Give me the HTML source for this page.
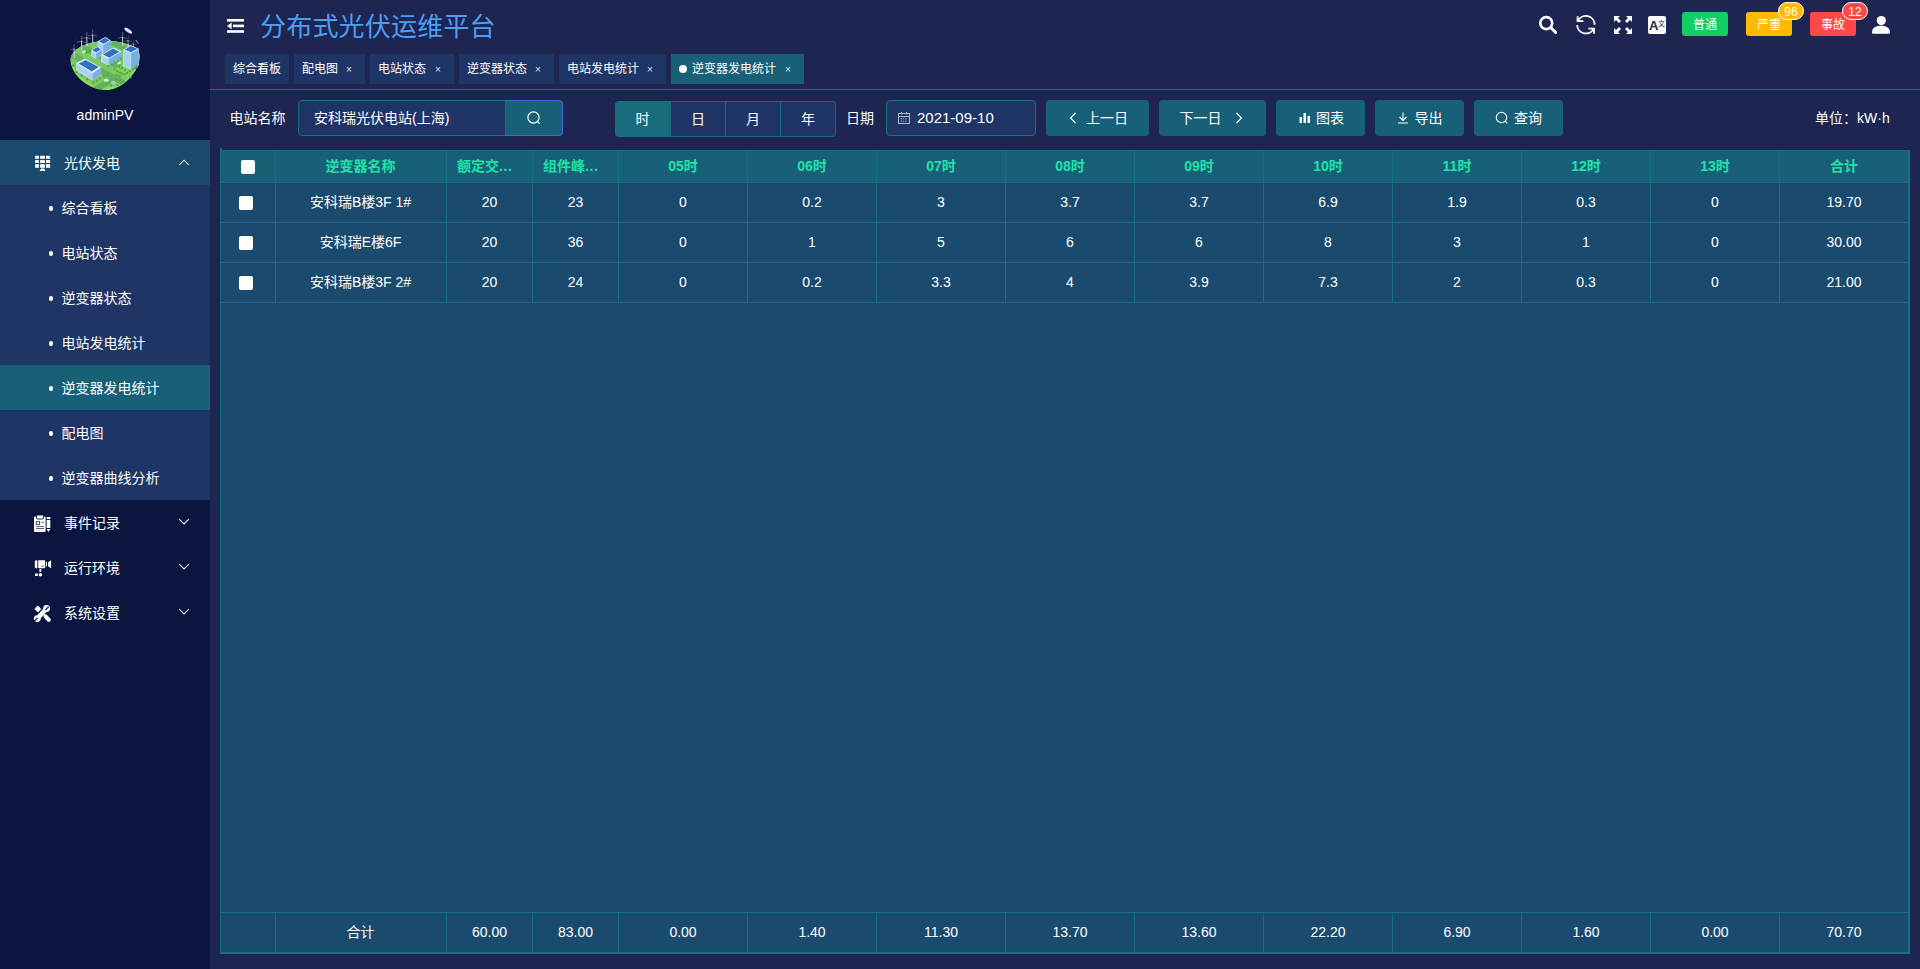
<!DOCTYPE html>
<html lang="zh-CN">
<head>
<meta charset="utf-8">
<title>分布式光伏运维平台</title>
<style>
*{box-sizing:border-box;margin:0;padding:0}
html,body{width:1920px;height:969px;overflow:hidden}
body{background:#1d2550;font-family:"Liberation Sans","Noto Sans CJK SC",sans-serif;color:#fff;font-size:14px;position:relative}
.abs{position:absolute}
/* sidebar */
#side{position:absolute;left:0;top:0;width:210px;height:969px;background:#0c1440}
#side .uname{position:absolute;left:0;width:210px;top:106px;text-align:center;font-size:14px;line-height:18px}
.mi{position:absolute;left:0;width:210px;height:45px;line-height:45px;font-size:14px}
.mi .ic2{position:absolute;left:0;top:0;width:80px;height:45px}
.mi .tx{position:absolute;left:64px;top:1px}
.mi .ar{position:absolute;left:178px;top:17px;width:12px;height:10px}
.sub{position:absolute;left:0;width:210px;height:45px;line-height:45px;font-size:14px;background:#1f3566}
.sub.on{background:#186078}
.sub .dot{position:absolute;left:48.6px;top:21.3px;width:4.6px;height:4.6px;border-radius:50%;background:#fff}
.sub .tx{position:absolute;left:61.6px;top:1px}
/* header */
#title{position:absolute;left:260px;top:9px;font-size:26px;line-height:36px;color:#4a9ff5;white-space:nowrap;letter-spacing:0.2px}
.tab{position:absolute;top:54px;height:30px;line-height:31px;background:#1f3566;font-size:12px;white-space:nowrap;padding-left:8px}
.tab.on{background:#186078}
.tab .x{position:absolute;top:0;font-size:10px;color:#dfe6f2}
#hline{position:absolute;left:210px;top:89px;width:1710px;height:1px;background:#17707f}
.badge{position:absolute;top:12px;height:24px;width:46px;border-radius:3px;font-size:12px;line-height:26px;text-align:center}
.cnt{position:absolute;top:2px;height:18px;border-radius:9px;font-size:12px;line-height:18px;text-align:center;border:1px solid #fff}
/* toolbar */
.lbl{position:absolute;top:100px;height:36px;line-height:36px;font-size:14px;white-space:nowrap}
.btn{position:absolute;top:100px;height:36px;line-height:36px;background:#186078;border-radius:4px;font-size:14px;text-align:center;white-space:nowrap}
.inp{position:absolute;top:100px;height:36px;line-height:34px;background:#1f3566;border:1px solid #18727f;font-size:14px;white-space:nowrap}
.rad{position:absolute;top:101px;height:36px;line-height:34px;background:#1f3566;border:1px solid #1a6a80;border-left:none;font-size:14px;text-align:center}
/* table */
#tbl{position:absolute;left:220px;top:150px;width:1690px;height:804px;background:#1b4a6f;border:1px solid #17707f;border-right-width:2px;border-bottom-width:2px}
.row{position:absolute;left:0;width:1687px}
.c{position:absolute;top:0;height:100%;text-align:center;border-right:1px solid #17707f;font-size:14px;white-space:nowrap;overflow:hidden}
.hd{background:#186078;color:#1fe3a9;font-weight:bold;font-size:13px}
.cb{position:absolute;width:14px;height:14px;background:#fff;border-radius:2px}
</style>
</head>
<body>
<div id="side">
<svg class="abs" style="left:60px;top:15px" width="90" height="85" viewBox="0 0 1026 969"><defs><clipPath id="isl"><path d="M120 520C118 400 290 300 520 297C760 294 915 380 910 475C902 640 730 852 520 856C330 858 128 690 120 520Z"/></clipPath></defs><path d="M120 520C118 400 290 300 520 297C760 294 915 380 910 475C902 640 730 852 520 856C330 858 128 690 120 520Z" fill="#8cdc5e"/><g clip-path="url(#isl)"><path d="M120 480C118 380 290 290 520 287C760 284 915 370 910 455C902 610 730 822 520 826C330 828 128 650 120 480Z" fill="#7cc862"/><g fill="#62b35c"><path d="M100 470L170 430L760 760L700 800Z"/><path d="M380 820L880 540L930 570L450 860Z"/><path d="M200 370L270 330L760 600L700 640Z"/><path d="M560 330L640 290L930 450L880 490Z"/></g><path d="M600 630L720 560L880 640L740 720Z" fill="#86d15e"/></g><path d="M372 228L375 320" stroke="#f2f6fb" stroke-width="9" stroke-linecap="round"/><g stroke="#f2f6fb" stroke-width="5" stroke-linecap="round" opacity="0.75"><path d="M372 228L374 170"/><path d="M372 228L324 236"/><path d="M372 228L418 240"/></g><path d="M305 258L308 350" stroke="#f2f6fb" stroke-width="9" stroke-linecap="round"/><g stroke="#f2f6fb" stroke-width="5" stroke-linecap="round" opacity="0.75"><path d="M305 258L307 200"/><path d="M305 258L257 266"/><path d="M305 258L351 270"/></g><path d="M245 300L248 392" stroke="#f2f6fb" stroke-width="9" stroke-linecap="round"/><g stroke="#f2f6fb" stroke-width="5" stroke-linecap="round" opacity="0.75"><path d="M245 300L247 242"/><path d="M245 300L197 308"/><path d="M245 300L291 312"/></g><path d="M160 388L163 483" stroke="#f2f6fb" stroke-width="8" stroke-linecap="round"/><g stroke="#f2f6fb" stroke-width="4" stroke-linecap="round" opacity="0.75"><path d="M160 388L162 336"/><path d="M160 388L117 395"/><path d="M160 388L201 399"/></g><path d="M712 255L715 347" stroke="#f2f6fb" stroke-width="9" stroke-linecap="round"/><g stroke="#f2f6fb" stroke-width="5" stroke-linecap="round" opacity="0.75"><path d="M712 255L714 197"/><path d="M712 255L664 263"/><path d="M712 255L758 267"/></g><path d="M775 292L778 352" stroke="#f2f6fb" stroke-width="7" stroke-linecap="round"/><g stroke="#f2f6fb" stroke-width="4" stroke-linecap="round" opacity="0.75"><path d="M775 292L777 246"/><path d="M775 292L737 298"/><path d="M775 292L812 302"/></g><path d="M835 330L838 360" stroke="#f2f6fb" stroke-width="5" stroke-linecap="round"/><g stroke="#f2f6fb" stroke-width="3" stroke-linecap="round" opacity="0.75"><path d="M835 330L837 295"/><path d="M835 330L806 335"/><path d="M835 330L863 337"/></g><g stroke="#3a4366" stroke-width="3" fill="none"><path d="M215 195L440 262"/><path d="M235 175L470 255"/><path d="M175 245L200 360"/></g><path d="M430 300L495 335L495 440L430 405Z" fill="#c6e0f8"/><path d="M495 335L578 290L578 395L495 440Z" fill="#8fbbe6"/><path d="M436 314L489 345L489 430L436 391Z" fill="#a9cff3"/><path d="M501 345L572 304L572 381L501 430Z" fill="#7aaee0"/><path d="M430 300L515 252L578 290L495 335Z" fill="#eef6fd"/><path d="M444 299L513 260L564 291L497 327Z" fill="#2f6fc4"/><path d="M355 400L410 432L410 498L355 466Z" fill="#c6e0f8"/><path d="M410 432L478 392L478 458L410 498Z" fill="#8fbbe6"/><path d="M361 414L404 442L404 488L361 452Z" fill="#a9cff3"/><path d="M416 442L472 406L472 444L416 488Z" fill="#7aaee0"/><path d="M355 400L428 358L478 392L410 432Z" fill="#eef6fd"/><path d="M367 399L426 365L466 393L411 425Z" fill="#2f6fc4"/><path d="M468 455L555 500L555 578L468 533Z" fill="#c6e0f8"/><path d="M555 500L700 415L700 493L555 578Z" fill="#8fbbe6"/><path d="M474 469L549 510L549 568L474 519Z" fill="#a9cff3"/><path d="M561 510L694 429L694 479L561 568Z" fill="#7aaee0"/><path d="M468 455L610 370L700 415L555 500Z" fill="#eef6fd"/><path d="M490 451L605 382L678 419L560 488Z" fill="#2f6fc4"/><path d="M720 395L808 432L808 622L720 585Z" fill="#c6e0f8"/><path d="M808 432L900 385L900 575L808 622Z" fill="#8fbbe6"/><path d="M726 409L802 442L802 612L726 571Z" fill="#a9cff3"/><path d="M814 442L894 399L894 561L814 612Z" fill="#7aaee0"/><path d="M720 395L810 345L900 385L808 432Z" fill="#eef6fd"/><path d="M737 394L810 353L883 386L808 424Z" fill="#2f6fc4"/><path d="M185 548L372 660L372 748L185 636Z" fill="#c6e0f8"/><path d="M372 660L468 598L468 686L372 748Z" fill="#8fbbe6"/><path d="M191 562L366 670L366 738L191 622Z" fill="#a9cff3"/><path d="M378 670L462 612L462 672L378 738Z" fill="#7aaee0"/><path d="M185 548L285 497L468 598L372 660Z" fill="#eef6fd"/><path d="M212 553L293 512L441 594L363 644Z" fill="#2f6fc4"/><circle cx="150" cy="575" r="13" fill="#3f9a3e"/><circle cx="147" cy="570" r="9" fill="#5fbb4a"/><circle cx="190" cy="650" r="13" fill="#3f9a3e"/><circle cx="187" cy="645" r="9" fill="#5fbb4a"/><circle cx="245" cy="690" r="13" fill="#3f9a3e"/><circle cx="242" cy="685" r="9" fill="#5fbb4a"/><circle cx="310" cy="730" r="13" fill="#3f9a3e"/><circle cx="307" cy="725" r="9" fill="#5fbb4a"/><circle cx="380" cy="770" r="13" fill="#3f9a3e"/><circle cx="377" cy="765" r="9" fill="#5fbb4a"/><circle cx="420" cy="750" r="13" fill="#3f9a3e"/><circle cx="417" cy="745" r="9" fill="#5fbb4a"/><circle cx="455" cy="725" r="13" fill="#3f9a3e"/><circle cx="452" cy="720" r="9" fill="#5fbb4a"/><circle cx="500" cy="700" r="13" fill="#3f9a3e"/><circle cx="497" cy="695" r="9" fill="#5fbb4a"/><circle cx="535" cy="680" r="13" fill="#3f9a3e"/><circle cx="532" cy="675" r="9" fill="#5fbb4a"/><circle cx="530" cy="780" r="13" fill="#3f9a3e"/><circle cx="527" cy="775" r="9" fill="#5fbb4a"/><circle cx="580" cy="805" r="13" fill="#3f9a3e"/><circle cx="577" cy="800" r="9" fill="#5fbb4a"/><circle cx="655" cy="800" r="13" fill="#3f9a3e"/><circle cx="652" cy="795" r="9" fill="#5fbb4a"/><circle cx="680" cy="745" r="13" fill="#3f9a3e"/><circle cx="677" cy="740" r="9" fill="#5fbb4a"/><circle cx="640" cy="735" r="13" fill="#3f9a3e"/><circle cx="637" cy="730" r="9" fill="#5fbb4a"/><circle cx="805" cy="710" r="13" fill="#3f9a3e"/><circle cx="802" cy="705" r="9" fill="#5fbb4a"/><circle cx="620" cy="620" r="13" fill="#3f9a3e"/><circle cx="617" cy="615" r="9" fill="#5fbb4a"/><circle cx="650" cy="640" r="13" fill="#3f9a3e"/><circle cx="647" cy="635" r="9" fill="#5fbb4a"/><circle cx="680" cy="655" r="13" fill="#3f9a3e"/><circle cx="677" cy="650" r="9" fill="#5fbb4a"/><circle cx="705" cy="668" r="13" fill="#3f9a3e"/><circle cx="702" cy="663" r="9" fill="#5fbb4a"/><circle cx="735" cy="678" r="13" fill="#3f9a3e"/><circle cx="732" cy="673" r="9" fill="#5fbb4a"/><circle cx="765" cy="660" r="13" fill="#3f9a3e"/><circle cx="762" cy="655" r="9" fill="#5fbb4a"/><circle cx="795" cy="640" r="13" fill="#3f9a3e"/><circle cx="792" cy="635" r="9" fill="#5fbb4a"/><circle cx="830" cy="618" r="13" fill="#3f9a3e"/><circle cx="827" cy="613" r="9" fill="#5fbb4a"/><circle cx="860" cy="600" r="13" fill="#3f9a3e"/><circle cx="857" cy="595" r="9" fill="#5fbb4a"/><circle cx="880" cy="590" r="13" fill="#3f9a3e"/><circle cx="877" cy="585" r="9" fill="#5fbb4a"/><circle cx="675" cy="590" r="13" fill="#3f9a3e"/><circle cx="672" cy="585" r="9" fill="#5fbb4a"/><circle cx="705" cy="605" r="13" fill="#3f9a3e"/><circle cx="702" cy="600" r="9" fill="#5fbb4a"/><circle cx="740" cy="625" r="13" fill="#3f9a3e"/><circle cx="737" cy="620" r="9" fill="#5fbb4a"/><circle cx="550" cy="585" r="13" fill="#3f9a3e"/><circle cx="547" cy="580" r="9" fill="#5fbb4a"/><circle cx="590" cy="560" r="13" fill="#3f9a3e"/><circle cx="587" cy="555" r="9" fill="#5fbb4a"/><circle cx="625" cy="540" r="13" fill="#3f9a3e"/><circle cx="622" cy="535" r="9" fill="#5fbb4a"/><circle cx="660" cy="520" r="13" fill="#3f9a3e"/><circle cx="657" cy="515" r="9" fill="#5fbb4a"/><circle cx="690" cy="500" r="13" fill="#3f9a3e"/><circle cx="687" cy="495" r="9" fill="#5fbb4a"/><circle cx="300" cy="430" r="13" fill="#3f9a3e"/><circle cx="297" cy="425" r="9" fill="#5fbb4a"/><circle cx="330" cy="415" r="13" fill="#3f9a3e"/><circle cx="327" cy="410" r="9" fill="#5fbb4a"/><circle cx="345" cy="405" r="13" fill="#3f9a3e"/><circle cx="342" cy="400" r="9" fill="#5fbb4a"/><ellipse cx="272" cy="420" rx="24" ry="14" fill="#cfe0f2" transform="rotate(-28 272 420)"/><ellipse cx="528" cy="745" rx="28" ry="16" fill="#e8eef7"/><ellipse cx="675" cy="548" rx="24" ry="12" fill="#d5e3f3" transform="rotate(-25 675 548)"/><ellipse cx="610" cy="770" rx="28" ry="20" fill="#8fd0f0"/><ellipse cx="620" cy="766" rx="10" ry="6" fill="#e0a030"/><ellipse cx="778" cy="178" rx="52" ry="19" fill="#d2e8fc" transform="rotate(36 778 178)"/><path d="M868 290L888 322" stroke="#dfeaf7" stroke-width="8" stroke-linecap="round"/></svg>

<div class="uname">adminPV</div>
<div class="mi" style="top:140px;background:#1a4a6e"><svg class="ic2" viewBox="0 0 80 45"><g fill="#fff"><rect x="35.1" y="15.8" width="3.9" height="3"/><rect x="40.1" y="15.8" width="4.8" height="3"/><rect x="46" y="15.8" width="4.1" height="3"/><rect x="35.1" y="20.1" width="3.9" height="2.9"/><rect x="40.1" y="20.1" width="4.8" height="2.9"/><rect x="46" y="20.1" width="4.1" height="2.9"/><rect x="35.1" y="24.2" width="3.9" height="3.6"/><rect x="40.1" y="24.2" width="4.8" height="3.6"/><rect x="46" y="24.2" width="4.1" height="3.6"/><path d="M41.2 28.6h2.8l1.6 2.4h-6z"/></g></svg><span class="tx">光伏发电</span><svg class="ar" viewBox="0 0 12 10"><path d="M1.2 8L6.05 3.2 10.9 8" stroke="#fff" stroke-width="1.05" fill="none"/></svg></div>
<div class="sub" style="top:185px"><i class="dot"></i><span class="tx">综合看板</span></div>
<div class="sub" style="top:230px"><i class="dot"></i><span class="tx">电站状态</span></div>
<div class="sub" style="top:275px"><i class="dot"></i><span class="tx">逆变器状态</span></div>
<div class="sub" style="top:320px"><i class="dot"></i><span class="tx">电站发电统计</span></div>
<div class="sub on" style="top:365px"><i class="dot"></i><span class="tx">逆变器发电统计</span></div>
<div class="sub" style="top:410px"><i class="dot"></i><span class="tx">配电图</span></div>
<div class="sub" style="top:455px"><i class="dot"></i><span class="tx">逆变器曲线分析</span></div>
<div class="mi" style="top:500px"><svg class="ic2" viewBox="0 0 80 45"><g transform="translate(28,8)"><rect x="6" y="8.4" width="11.6" height="15.6" rx="1.2" fill="#fff"/><rect x="8.6" y="7" width="7" height="4" rx="1" fill="#fff" stroke="#0c1440" stroke-width="0.9"/><g stroke="#0c1440" fill="none" opacity="0.75"><rect x="8.3" y="13.6" width="3.2" height="3" stroke-width="1"/><path d="M13.3 14.3h2.6M8 18.6h7.9M8 20.5h7.9" stroke-width="0.9"/></g><g fill="#fff"><rect x="18.6" y="9" width="3.7" height="2"/><rect x="18.6" y="11.9" width="3.7" height="8.1"/><path d="M18.6 21h3.7l-1.85 3.1z"/></g></g></svg><span class="tx">事件记录</span><svg class="ar" style="top:16px" viewBox="0 0 12 10"><path d="M1.2 3.1L6.05 7.9 10.9 3.1" stroke="#fff" stroke-width="1.05" fill="none"/></svg></div>
<div class="mi" style="top:545px"><svg class="ic2" viewBox="0 0 80 45"><g transform="translate(28,8)" fill="#fff"><path d="M9.3 7.3v7.9h-1a1.5 1.5 0 0 1-1.5-1.5V8.8a1.5 1.5 0 0 1 1.5-1.5z"/><rect x="10.2" y="7.3" width="7" height="7.9" rx="0.6"/><rect x="18" y="9" width="1" height="4.2"/><path d="M20.1 9.2l3-1.9v7.9l-3-1.9z"/><rect x="11.4" y="16.1" width="1.9" height="2.8" rx="0.5"/><circle cx="12.4" cy="21.8" r="1.75"/><rect x="7" y="20.6" width="2.9" height="2.3" rx="0.3"/><rect x="13.2" y="12.6" width="2.6" height="0.9" fill="#0c1440" opacity="0.7"/></g></svg><span class="tx">运行环境</span><svg class="ar" style="top:16px" viewBox="0 0 12 10"><path d="M1.2 3.1L6.05 7.9 10.9 3.1" stroke="#fff" stroke-width="1.05" fill="none"/></svg></div>
<div class="mi" style="top:590px"><svg class="ic2" viewBox="0 0 80 45"><g transform="translate(28,8)"><path d="M9.2 20.8L18.7 10.3" stroke="#fff" stroke-width="4.6" stroke-linecap="round"/><circle cx="9.3" cy="20.6" r="3.4" fill="#fff"/><circle cx="18.6" cy="10.4" r="3.4" fill="#fff"/><path d="M6.2 23.4l3.4-3.6M17.4 12l3.2-3.4" stroke="#0c1440" stroke-width="1.2"/><path d="M9.8 7.9l3 3.2-3 3-3-3.1z" fill="#fff" stroke="#fff" stroke-width="0.8" stroke-linejoin="round"/><path d="M17.6 18.4l3.2 3.4" stroke="#fff" stroke-width="4" stroke-linecap="round"/><path d="M15.8 16.6l1.6 1.6" stroke="#fff" stroke-width="1.6"/></g></svg><span class="tx">系统设置</span><svg class="ar" style="top:16px" viewBox="0 0 12 10"><path d="M1.2 3.1L6.05 7.9 10.9 3.1" stroke="#fff" stroke-width="1.05" fill="none"/></svg></div>
</div>
<svg class="abs" style="left:227px;top:19.4px" width="18" height="14" viewBox="0 0 18 14"><g fill="#fff"><rect x="0" y="0" width="17" height="2.6"/><rect x="6" y="5.6" width="11" height="2.6"/><rect x="0" y="11.2" width="17" height="2.6"/><path d="M0 6.9L4.6 3.6v6.6z"/></g></svg>
<div id="title">分布式光伏运维平台</div>
<svg class="abs" style="left:1537px;top:14px" width="22" height="22" viewBox="0 0 22 22"><circle cx="9.25" cy="9.1" r="6" stroke="#fff" stroke-width="2.6" fill="none"/><path d="M13.6 13.5L18.6 18.4" stroke="#fff" stroke-width="2.9" stroke-linecap="round"/></svg>
<svg class="abs" style="left:1573.75px;top:12.8px" width="23.44" height="23.44" viewBox="560 100 300 300"><g stroke="#fff" stroke-width="23" fill="none"><path d="M612 200A112 112 0 0 1 824 250"/><path d="M606 140V205H680"/><path d="M600 255A112 112 0 0 0 812 300"/><path d="M744 300H816V365"/></g></svg>
<svg class="abs" style="left:1613px;top:15px" width="20" height="20" viewBox="0 0 20 20"><g fill="#fff"><path d="M1 1h6L5 3l3 3-2 2-3-3-2 2z"/><path d="M19 1v6l-2-2-3 3-2-2 3-3-2-2z"/><path d="M1 19v-6l2 2 3-3 2 2-3 3 2 2z"/><path d="M19 19h-6l2-2-3-3 2-2 3 3 2-2z"/></g></svg>
<div class="abs" style="left:1648px;top:16px;width:18px;height:18px;background:#fff;border-radius:2px;color:#1d2550;font-weight:bold;font-size:13px;line-height:19px;padding-left:1px">A<span style="position:absolute;left:10px;top:-2px;font-size:7px;font-weight:normal">文</span></div>
<div class="badge" style="left:1682px;background:#13ce66">普通</div>
<div class="badge" style="left:1746px;background:#ffba00">严重</div>
<div class="badge" style="left:1810px;background:#ff4949">事故</div>
<div class="cnt" style="left:1778px;width:26px;background:#ffba00">96</div>
<div class="cnt" style="left:1842px;width:26px;background:#ff4949">12</div>
<svg class="abs" style="left:1871px;top:15px" width="20" height="20" viewBox="0 0 20 20"><g fill="#fff"><circle cx="10.3" cy="5.6" r="4.6"/><path d="M1 17.4C1 13 4.2 10.7 10 10.7S19 13 19 17.4a1.3 1.3 0 0 1-1.3 1.3H2.3A1.3 1.3 0 0 1 1 17.4z"/></g></svg>
<div class="tab" style="left:225px;width:64px">综合看板</div>
<div class="tab" style="left:294px;width:71px">配电图<span class="x" style="left:52px">×</span></div>
<div class="tab" style="left:370px;width:84px">电站状态<span class="x" style="left:65px">×</span></div>
<div class="tab" style="left:459px;width:95px">逆变器状态<span class="x" style="left:76px">×</span></div>
<div class="tab" style="left:559px;width:107px">电站发电统计<span class="x" style="left:88px">×</span></div>
<div class="tab on" style="left:671px;width:133px"><i style="position:absolute;left:8px;top:11px;width:8px;height:8px;border-radius:50%;background:#fff"></i><span style="margin-left:13px">逆变器发电统计</span><span class="x" style="left:114px">×</span></div>
<div id="hline"></div>
<div class="lbl" style="left:229.4px">电站名称</div>
<div class="inp" style="left:298px;width:208px;border-radius:4px 0 0 4px;padding-left:15px">安科瑞光伏电站(上海)</div>
<div class="abs" style="left:505px;top:100px;width:58px;height:36px;background:#186078;border:1px solid #4668d0;border-left:1px solid #18727f;border-radius:0 4px 4px 0"><svg style="position:absolute;left:20px;top:9px" width="16" height="16" viewBox="0 0 16 16"><circle cx="7.5" cy="7.5" r="5.6" stroke="#fff" stroke-width="1.2" fill="none"/><path d="M11.5 11.5l2.3 2.3" stroke="#fff" stroke-width="1.2"/></svg></div>
<div class="rad" style="left:615px;width:56px;background:#186c7c;border-color:#186c7c;border-radius:4px 0 0 4px">时</div>
<div class="rad" style="left:671px;width:55px">日</div>
<div class="rad" style="left:726px;width:55px">月</div>
<div class="rad" style="left:781px;width:55px;border-radius:0 4px 4px 0">年</div>
<div class="lbl" style="left:846px">日期</div>
<div class="inp" style="left:886px;width:150px;border-radius:4px;padding-left:30px;font-size:15px"><svg style="position:absolute;left:10px;top:10px" width="14" height="14" viewBox="0 0 14 14"><g stroke="#b4bacb" fill="none" stroke-width="1"><rect x="1.5" y="2.5" width="11" height="10"/><path d="M1.5 5.5h11M4.5 1v2.5M9.5 1v2.5"/><path d="M3.5 7.8h7M3.5 10.2h7" stroke-dasharray="1.4 0.9" stroke-width="0.9"/></g></svg>2021-09-10</div>
<div class="btn" style="left:1046px;width:103px"><span style="margin-left:2px"><svg width="8" height="12" viewBox="0 0 8 12" style="vertical-align:-1px"><path d="M6.5 1L1.5 6l5 5" stroke="#fff" stroke-width="1.2" fill="none"/></svg></span><span style="margin-left:9px">上一日</span></div>
<div class="btn" style="left:1159px;width:107px"><span style="margin-right:13px;margin-left:-3px">下一日</span><svg width="8" height="12" viewBox="0 0 8 12" style="vertical-align:-1px"><path d="M1.5 1l5 5-5 5" stroke="#fff" stroke-width="1.2" fill="none"/></svg></div>
<div class="btn" style="left:1276px;width:89px;padding-left:2px"><svg width="12" height="12" viewBox="0 0 12 12" style="vertical-align:-1px"><g fill="#fff"><rect x="0.5" y="5" width="2.5" height="6"/><rect x="4.5" y="1" width="2.5" height="10"/><rect x="8.5" y="4" width="2.5" height="7"/></g></svg><span style="margin-left:5px">图表</span></div>
<div class="btn" style="left:1375px;width:89px"><svg width="12" height="12" viewBox="0 0 12 12" style="vertical-align:-1px"><g stroke="#fff" stroke-width="1.1" fill="none"><path d="M6 0.5v7.5M2.5 5L6 8.5 9.5 5M1 11h10"/></g></svg><span style="margin-left:6px">导出</span></div>
<div class="btn" style="left:1474px;width:89px"><svg width="14" height="14" viewBox="0 0 14 14" style="vertical-align:-2px"><circle cx="6.5" cy="6.5" r="5.2" stroke="#fff" stroke-width="1.1" fill="none"/><path d="M10.3 10.3l2 2" stroke="#fff" stroke-width="1.1"/></svg><span style="margin-left:5px">查询</span></div>
<div class="lbl" style="left:1815px">单位：kW·h</div>
<div class="abs" style="left:220px;top:148px;width:2px;height:2px;background:#17707f"></div>
<div id="tbl">
<div class="row hd" style="top:0px;height:32px;line-height:31px;border-bottom:1px solid #17707f;">
<div class="c" style="left:0px;width:55px"><i class="cb" style="left:20px;top:9px"></i></div>
<div class="c" style="left:55px;width:171px;padding-right:1px">逆变器名称</div>
<div class="c" style="left:226px;width:86px;text-align:left;padding-left:10px">额定交<span style="letter-spacing:0.6px">...</span></div>
<div class="c" style="left:312px;width:86px;text-align:left;padding-left:10px">组件峰<span style="letter-spacing:0.6px">...</span></div>
<div class="c" style="left:398px;width:129px">05时</div>
<div class="c" style="left:527px;width:129px">06时</div>
<div class="c" style="left:656px;width:129px">07时</div>
<div class="c" style="left:785px;width:129px">08时</div>
<div class="c" style="left:914px;width:129px">09时</div>
<div class="c" style="left:1043px;width:129px">10时</div>
<div class="c" style="left:1172px;width:129px">11时</div>
<div class="c" style="left:1301px;width:129px">12时</div>
<div class="c" style="left:1430px;width:129px">13时</div>
<div class="c" style="left:1559px;width:128px;border-right:none">合计</div>
</div>
<div class="row " style="top:32px;height:40px;line-height:39px;border-bottom:1px solid #17707f;">
<div class="c" style="left:0px;width:55px"><i class="cb" style="left:18px;top:13px"></i></div>
<div class="c" style="left:55px;width:171px;padding-right:1px">安科瑞B楼3F 1#</div>
<div class="c" style="left:226px;width:86px">20</div>
<div class="c" style="left:312px;width:86px">23</div>
<div class="c" style="left:398px;width:129px">0</div>
<div class="c" style="left:527px;width:129px">0.2</div>
<div class="c" style="left:656px;width:129px">3</div>
<div class="c" style="left:785px;width:129px">3.7</div>
<div class="c" style="left:914px;width:129px">3.7</div>
<div class="c" style="left:1043px;width:129px">6.9</div>
<div class="c" style="left:1172px;width:129px">1.9</div>
<div class="c" style="left:1301px;width:129px">0.3</div>
<div class="c" style="left:1430px;width:129px">0</div>
<div class="c" style="left:1559px;width:128px;border-right:none">19.70</div>
</div>
<div class="row " style="top:72px;height:40px;line-height:39px;border-bottom:1px solid #17707f;">
<div class="c" style="left:0px;width:55px"><i class="cb" style="left:18px;top:13px"></i></div>
<div class="c" style="left:55px;width:171px;padding-right:1px">安科瑞E楼6F</div>
<div class="c" style="left:226px;width:86px">20</div>
<div class="c" style="left:312px;width:86px">36</div>
<div class="c" style="left:398px;width:129px">0</div>
<div class="c" style="left:527px;width:129px">1</div>
<div class="c" style="left:656px;width:129px">5</div>
<div class="c" style="left:785px;width:129px">6</div>
<div class="c" style="left:914px;width:129px">6</div>
<div class="c" style="left:1043px;width:129px">8</div>
<div class="c" style="left:1172px;width:129px">3</div>
<div class="c" style="left:1301px;width:129px">1</div>
<div class="c" style="left:1430px;width:129px">0</div>
<div class="c" style="left:1559px;width:128px;border-right:none">30.00</div>
</div>
<div class="row " style="top:112px;height:40px;line-height:39px;border-bottom:1px solid #17707f;">
<div class="c" style="left:0px;width:55px"><i class="cb" style="left:18px;top:13px"></i></div>
<div class="c" style="left:55px;width:171px;padding-right:1px">安科瑞B楼3F 2#</div>
<div class="c" style="left:226px;width:86px">20</div>
<div class="c" style="left:312px;width:86px">24</div>
<div class="c" style="left:398px;width:129px">0</div>
<div class="c" style="left:527px;width:129px">0.2</div>
<div class="c" style="left:656px;width:129px">3.3</div>
<div class="c" style="left:785px;width:129px">4</div>
<div class="c" style="left:914px;width:129px">3.9</div>
<div class="c" style="left:1043px;width:129px">7.3</div>
<div class="c" style="left:1172px;width:129px">2</div>
<div class="c" style="left:1301px;width:129px">0.3</div>
<div class="c" style="left:1430px;width:129px">0</div>
<div class="c" style="left:1559px;width:128px;border-right:none">21.00</div>
</div>
<div class="row " style="top:761px;height:40px;line-height:39px;border-top:1px solid #17707f;">
<div class="c" style="left:0px;width:55px"></div>
<div class="c" style="left:55px;width:171px;padding-right:1px">合计</div>
<div class="c" style="left:226px;width:86px">60.00</div>
<div class="c" style="left:312px;width:86px">83.00</div>
<div class="c" style="left:398px;width:129px">0.00</div>
<div class="c" style="left:527px;width:129px">1.40</div>
<div class="c" style="left:656px;width:129px">11.30</div>
<div class="c" style="left:785px;width:129px">13.70</div>
<div class="c" style="left:914px;width:129px">13.60</div>
<div class="c" style="left:1043px;width:129px">22.20</div>
<div class="c" style="left:1172px;width:129px">6.90</div>
<div class="c" style="left:1301px;width:129px">1.60</div>
<div class="c" style="left:1430px;width:129px">0.00</div>
<div class="c" style="left:1559px;width:128px;border-right:none">70.70</div>
</div>
</div>
</body>
</html>
